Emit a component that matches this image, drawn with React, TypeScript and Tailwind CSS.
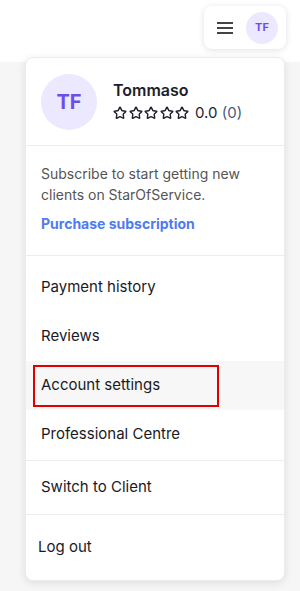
import { Star } from 'lucide-react'

const font = { fontFamily: 'Inter, "Noto Sans", sans-serif' }

const menu = ['Payment history', 'Reviews', 'Account settings', 'Professional Centre']

export default function App() {
  return (
    <div className="relative h-[591px] w-[300px] overflow-hidden bg-[#f6f6f6]" style={font}>
      {/* Top bar */}
      <div className="h-[62px] w-full bg-white" />

      {/* Header button */}
      <div className="absolute left-[204px] top-[6px] flex h-[43px] w-[82px] items-center justify-between rounded-lg bg-white pl-[13px] pr-[8px] shadow-[0_1px_6px_rgba(0,0,0,0.12)]">
        <div className="flex w-4 flex-col gap-[3px]">
          <span className="h-[2px] w-4 bg-[#444]" />
          <span className="h-[2px] w-4 bg-[#444]" />
          <span className="h-[2px] w-4 bg-[#444]" />
        </div>
        <div className="flex h-8 w-8 items-center justify-center rounded-full bg-[#ece8ff] text-[11px] font-bold text-[#6b4fe8]">
          TF
        </div>
      </div>

      {/* Dropdown */}
      <div className="absolute left-[25px] top-[57px] flex w-[260px] flex-col rounded-lg border border-[#ececec] bg-white shadow-[0_2px_8px_rgba(0,0,0,0.10)]">
        <div className="flex h-[87px] items-center gap-4 px-[15px]">
          <div className="flex h-14 w-14 shrink-0 items-center justify-center rounded-full bg-[#ece8ff] text-[20px] font-bold text-[#6b4fe8]">
            TF
          </div>
          <div className="flex flex-col gap-[3px]">
            <span className="text-[16px] font-semibold leading-5 text-[#1e1e2a]">Tommaso</span>
            <div className="flex items-center gap-[6px]">
              <div className="flex gap-[1.5px]">
                {[0, 1, 2, 3, 4].map((i) => (
                  <Star key={i} size={14} strokeWidth={2.4} className="text-[#1e1e2a]" />
                ))}
              </div>
              <span className="text-[15px] leading-5 text-[#1e1e2a]">
                0.0 <span className="text-[#4a5a80]">(0)</span>
              </span>
            </div>
          </div>
        </div>

        <div className="flex h-[110px] flex-col border-t border-[#ececec] px-[15px] pt-[17px]">
          <p className="text-[14px] leading-[21px] text-[#555]">
            Subscribe to start getting new clients on StarOfService.
          </p>
          <span className="mt-[8px] text-[14px] font-bold text-[#4d7cf0]">Purchase subscription</span>
        </div>

        <div className="flex h-[205px] flex-col border-t border-[#ececec] pt-[7px]">
          {menu.map((item) => (
            <div
              key={item}
              className={`flex h-[49px] items-center px-[15px] text-[15px] text-[#1a1a26] ${item === 'Account settings' ? 'bg-[#f7f7f7]' : ''}`}
            >
              {item === 'Account settings' ? (
                <span className="-mx-2 flex h-[42px] w-[186px] items-center border-2 border-[#e00000] px-[6px]">
                  {item}
                </span>
              ) : (
                item
              )}
            </div>
          ))}
        </div>

        <div className="flex h-[54px] items-center border-t border-[#ececec] px-[15px] text-[15px] text-[#1a1a26]">
          Switch to Client
        </div>

        <div className="flex h-[66px] items-center border-t border-[#ececec] px-[12px] text-[15px] text-[#1a1a26]">
          Log out
        </div>
      </div>
    </div>
  )
}
